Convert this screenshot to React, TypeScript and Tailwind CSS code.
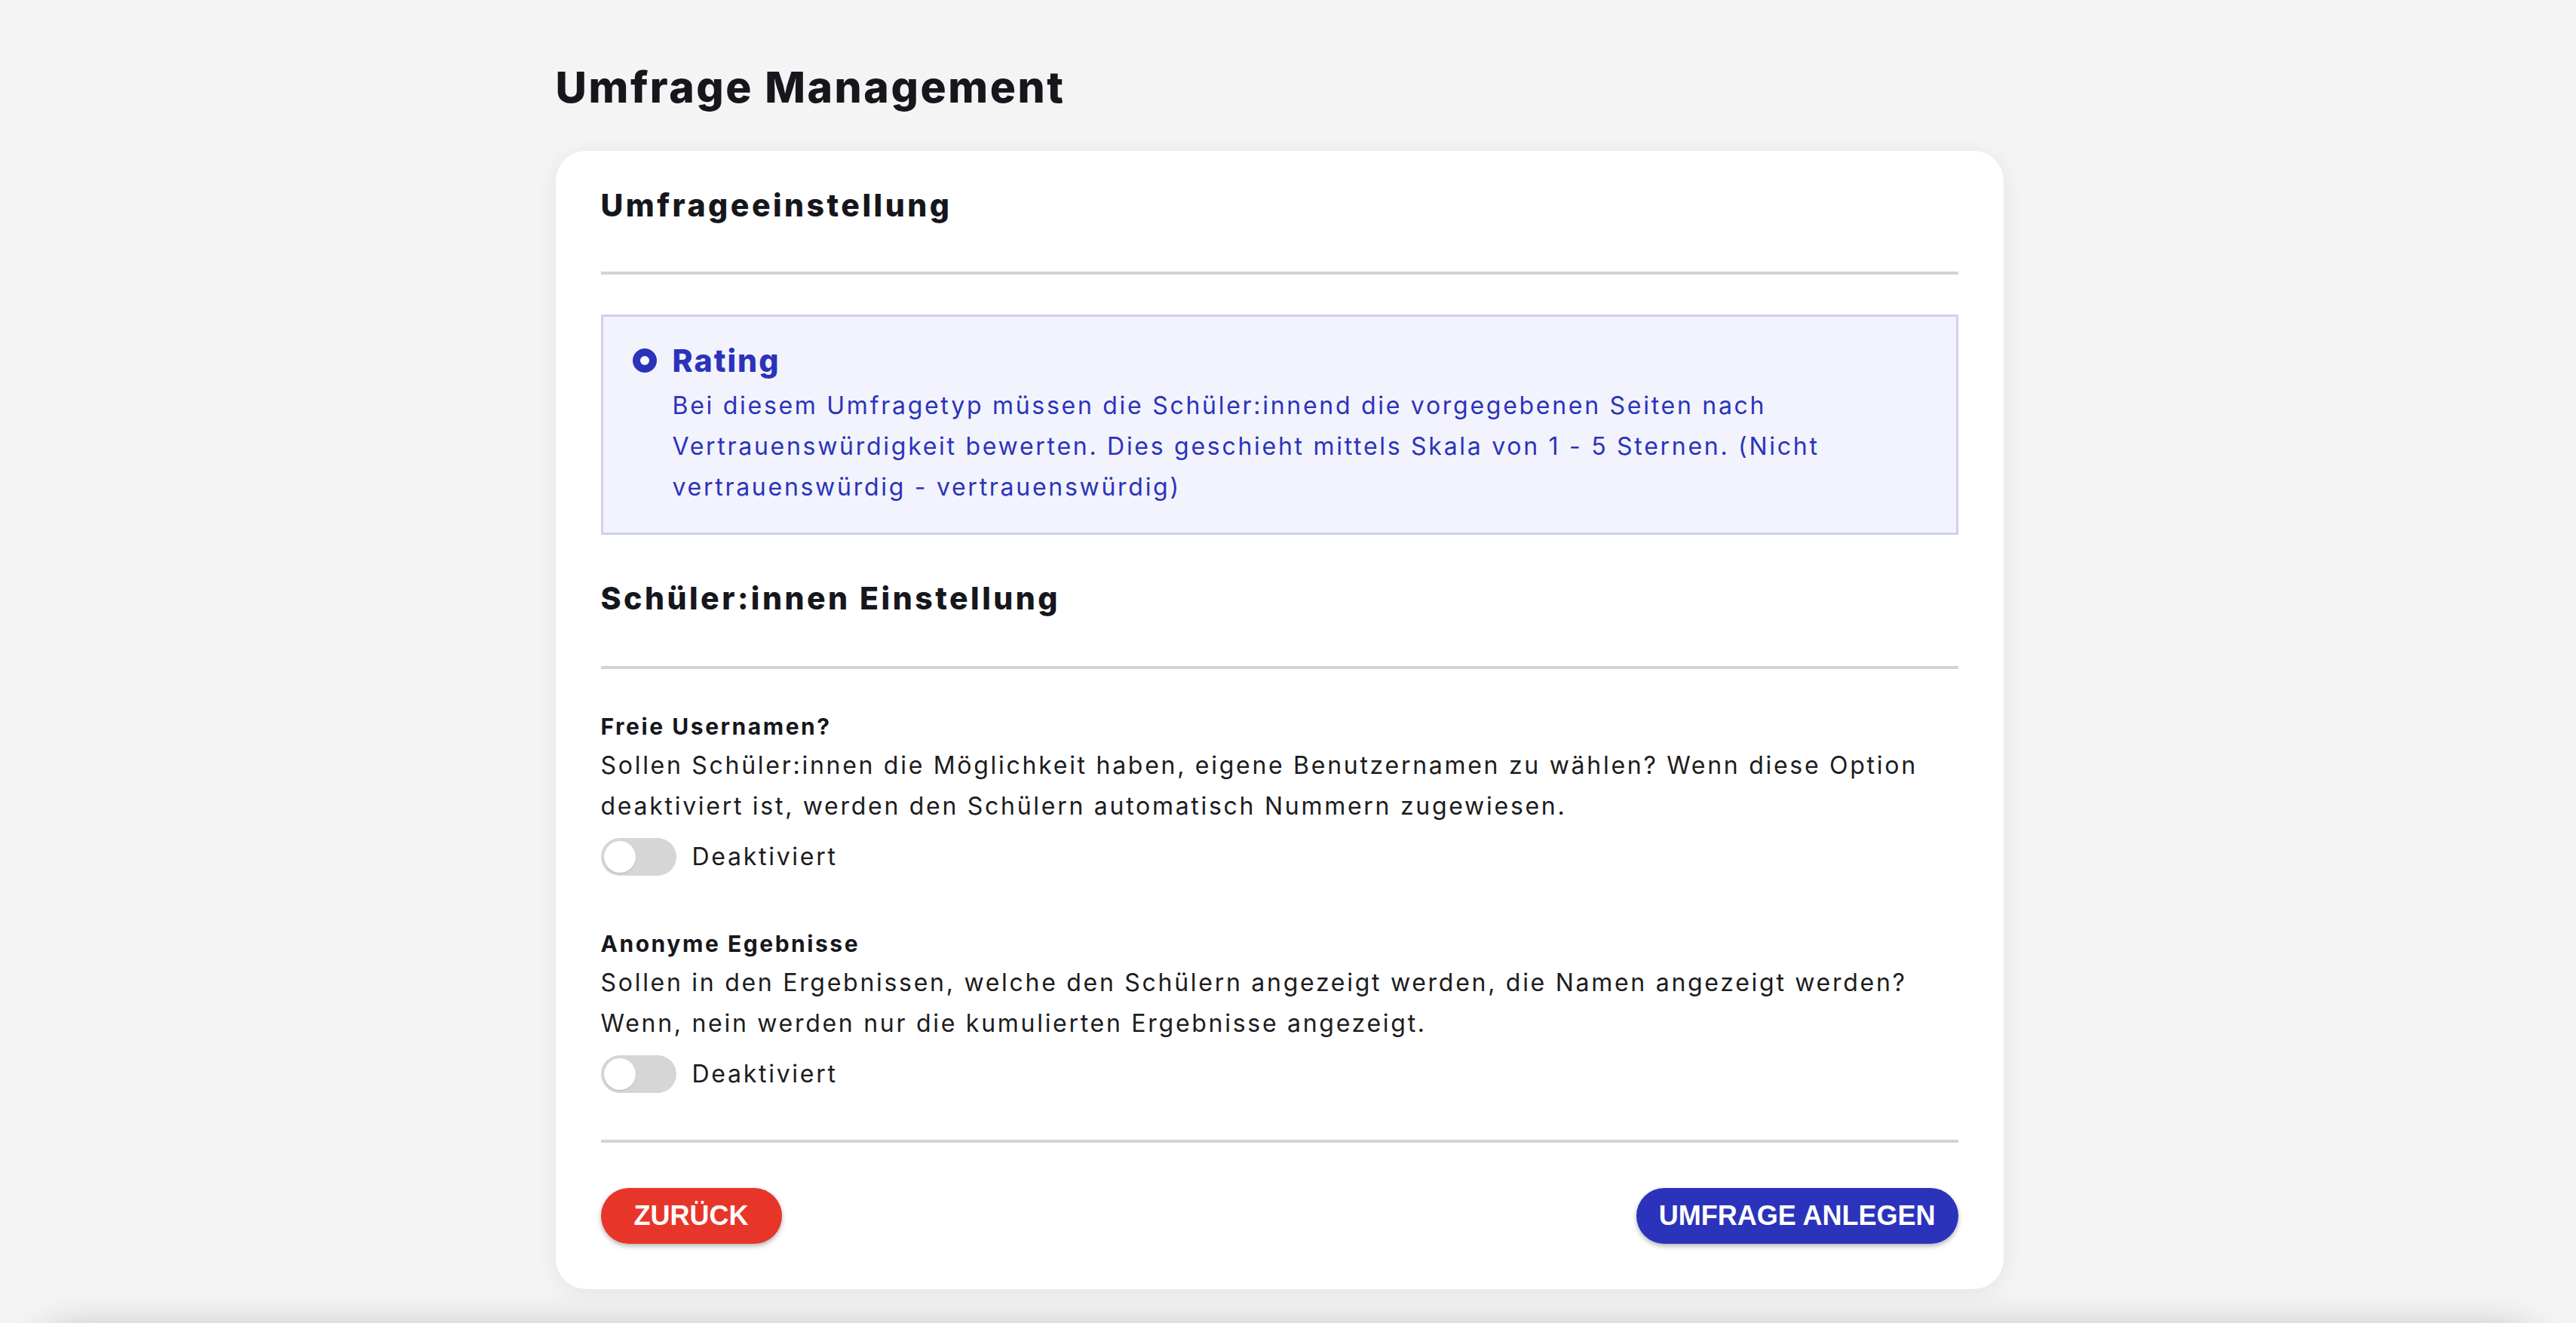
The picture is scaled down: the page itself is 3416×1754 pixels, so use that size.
import React from "react";

const font = "font-['Inter','Noto_Sans',sans-serif]";

const Toggle = ({ label }: { label: string }) => (
  <div className="mt-[13px] flex items-center gap-[21px]">
    <div className="flex h-[50px] w-[100px] items-center rounded-full bg-[#d6d6d6] px-[4px]">
      <div className="h-[42px] w-[42px] rounded-full bg-white shadow-[0_1px_2px_rgba(0,0,0,0.15)]" />
    </div>
    <span className="text-[32px] leading-[54px] tracking-[0.085em] text-[#1c1c20]">{label}</span>
  </div>
);

const Setting = ({ title, text }: { title: string; text: string }) => (
  <div>
    <h4 className="text-[30px] font-bold leading-[40px] tracking-[0.085em] text-[#16171c]">{title}</h4>
    <p className="mt-[5px] text-[32px] leading-[54px] tracking-[0.085em] text-[#1c1c20]">{text}</p>
    <Toggle label="Deaktiviert" />
  </div>
);

export default function App() {
  return (
    <div className={`${font} min-h-screen overflow-hidden bg-[#f4f4f4]`}>
      <div className="flex justify-center pr-[23px] pt-[82px]">
        <div className="w-[1920px]">
          <h1 className="text-[57px] font-extrabold leading-[67px] tracking-[0.045em] text-[#16171c]">
            Umfrage Management
          </h1>

          <div className="mt-[51px] rounded-[40px] bg-white px-[60px] pb-[60px] pt-[48px] shadow-[0_4px_30px_rgba(0,0,0,0.07)]">
            <h2 className="text-[41px] font-extrabold leading-[48px] tracking-[0.085em] text-[#16171c]">
              Umfrageeinstellung
            </h2>
            <div className="mt-[64px] h-[4px] bg-[#d3d3d3]" />

            <div className="mt-[53px] border-[3px] border-[#cdd0f0] bg-[#f2f3fc] pb-[33px] pl-[39px] pr-[40px] pt-[34px]">
              <div className="flex items-center gap-[21px]">
                <div className="h-[32px] w-[32px] rounded-full border-[10px] border-[#2b33bb] bg-white" />
                <span className="text-[41px] font-extrabold leading-[48px] tracking-[0.05em] text-[#2b33bb]">Rating</span>
              </div>
              <p className="mt-[9px] pl-[53px] text-[32px] leading-[54px] tracking-[0.085em] text-[#2b33bb]">
                Bei diesem Umfragetyp müssen die Schüler:innend die vorgegebenen Seiten nach Vertrauenswürdigkeit
                bewerten. Dies geschieht mittels Skala von 1 - 5 Sternen. (Nicht vertrauenswürdig - vertrauenswürdig)
              </p>
            </div>

            <h2 className="mt-[60px] text-[41px] font-extrabold leading-[48px] tracking-[0.085em] text-[#16171c]">
              Schüler:innen Einstellung
            </h2>
            <div className="mt-[66px] h-[4px] bg-[#d3d3d3]" />

            <div className="mt-[56px] flex flex-col gap-[68px]">
              <Setting
                title="Freie Usernamen?"
                text="Sollen Schüler:innen die Möglichkeit haben, eigene Benutzernamen zu wählen? Wenn diese Option deaktiviert ist, werden den Schülern automatisch Nummern zugewiesen."
              />
              <Setting
                title="Anonyme Egebnisse"
                text="Sollen in den Ergebnissen, welche den Schülern angezeigt werden, die Namen angezeigt werden? Wenn, nein werden nur die kumulierten Ergebnisse angezeigt."
              />
            </div>

            <div className="mt-[60px] h-[4px] bg-[#d3d3d3]" />

            <div className="mt-[60px] flex items-center justify-between font-['Liberation_Sans',Arial,sans-serif]">
              <button className="h-[74px] min-w-[240px] rounded-full bg-[#e8352a] px-[30px] text-[36px] font-bold uppercase text-white shadow-[0_3px_6px_rgba(0,0,0,0.3)]">
                Zurück
              </button>
              <button className="h-[74px] min-w-[240px] rounded-full bg-[#2b33bb] px-[30px] text-[36px] font-bold uppercase text-white shadow-[0_3px_6px_rgba(0,0,0,0.3)]">
                Umfrage anlegen
              </button>
            </div>
          </div>
        </div>
      </div>
      <div className="mx-[40px] mt-[50px] h-[200px] rounded-[60px] bg-[#f4f4f4] shadow-[0_0_50px_rgba(0,0,0,0.2)]" />
    </div>
  );
}
